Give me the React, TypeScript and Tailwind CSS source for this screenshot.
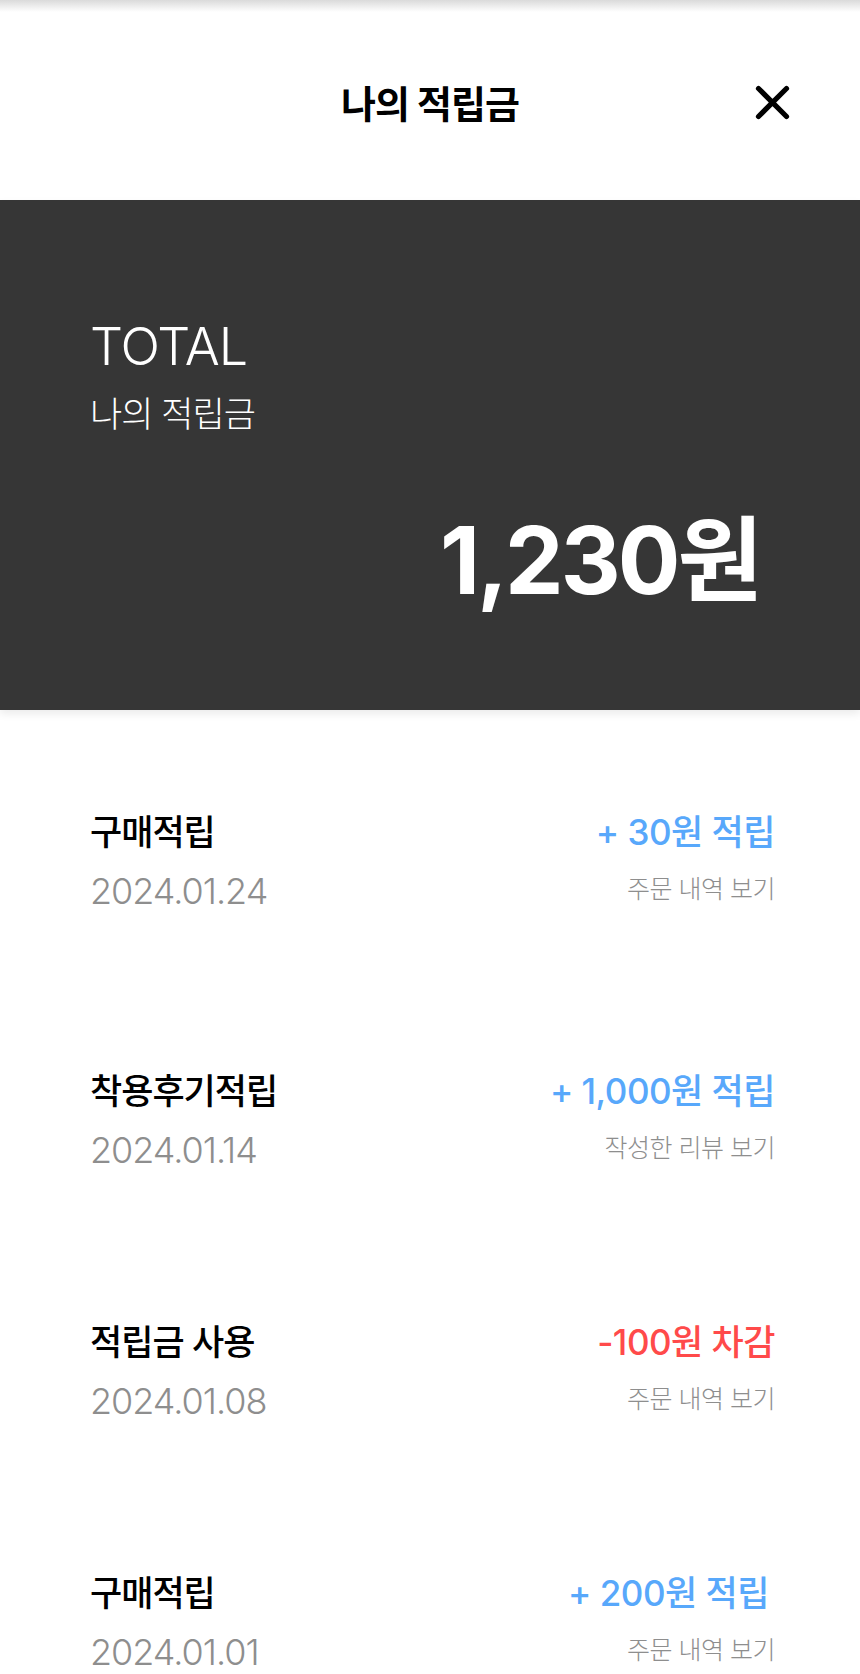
const history = [
  { title: "구매적립", date: "2024.01.24", amount: "+ 30원 적립", link: "주문 내역 보기", minus: false },
  { title: "착용후기적립", date: "2024.01.14", amount: "+ 1,000원 적립", link: "작성한 리뷰 보기", minus: false },
  { title: "적립금 사용", date: "2024.01.08", amount: "-100원 차감", link: "주문 내역 보기", minus: true },
  { title: "구매적립", date: "2024.01.01", amount: "+ 200원 적립", link: "주문 내역 보기", minus: false, inset: true },
];

const font = "font-['Inter','Noto_Sans_CJK_KR',sans-serif]";

export default function App() {
  return (
    <div className={`min-h-[1674px] w-full overflow-hidden bg-white ${font}`}>
      <div className="h-[12px] bg-gradient-to-b from-[#dadada] to-white" />

      <header className="relative flex h-[188px] items-center justify-center pb-[4px]">
        <h1 className="text-[38px] font-bold tracking-[-1px] text-black">나의 적립금</h1>
        <button className="absolute right-[70px] top-[73px] text-black">
          <svg className="h-[35px] w-[35px]" viewBox="0 0 35 35" fill="none" stroke="currentColor">
            <path strokeLinecap="round" strokeWidth={5.2} d="M3.5 3.5l28 28M31.5 3.5l-28 28" />
          </svg>
        </button>
      </header>

      <section className="relative z-10 flex h-[510px] flex-col bg-[#363636] pl-[90px] pr-[100px] pt-[117px] text-white shadow-[0_4px_8px_rgba(0,0,0,0.08)]">
        <p className="text-[52px] font-light leading-[60px] tracking-[-1px]">TOTAL</p>
        <p className="mt-[16px] text-[35px] font-light leading-[42px] tracking-[-1px]">나의 적립금</p>
        <p className="mt-[75px] self-end text-[93px] font-bold leading-[100px] tracking-[-3px]">1,230원</p>
      </section>

      <ul className="flex flex-col gap-[150px] pl-[90px] pr-[85px] pt-[102px]">
        {history.map((item, i) => (
          <li key={item.date} className={`flex items-start justify-between ${i === 0 ? "mb-[8px]" : ""}`}>
            <div className="flex flex-col">
              <span className="text-[35px] font-medium leading-[40px] tracking-[-1px] text-black">{item.title}</span>
              <span className="mt-[17px] text-[36px] font-light leading-[44px] tracking-[-1px] text-[#8e8e8e]">{item.date}</span>
            </div>
            <div className="flex flex-col items-end">
              <span
                className={`text-[35px] font-medium leading-[40px] tracking-[-0.5px] ${item.minus ? "text-[#ff4a4a]" : "text-[#58a8fb]"} ${item.inset ? "mr-[6px]" : ""}`}
              >
                {item.amount}
              </span>
              <span className="mt-[22px] text-[25px] font-light leading-[30px] tracking-[-0.5px] text-[#8e8e8e]">{item.link}</span>
            </div>
          </li>
        ))}
      </ul>
    </div>
  );
}
